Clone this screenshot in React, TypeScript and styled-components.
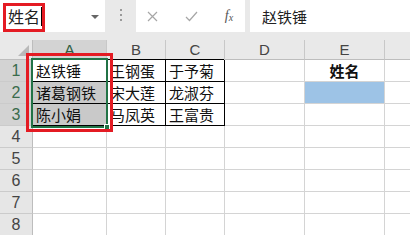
import React from 'react';
import styled, {createGlobalStyle} from 'styled-components';

const GlobalStyle = createGlobalStyle`
    html, body {
        margin: 0;
        padding: 0;
        width: 410px;
        height: 235px;
        overflow: hidden;
        background: #ffffff;
    }
    * {
        box-sizing: border-box;
    }
`;

const cjk = `"Noto Sans CJK SC", "Noto Sans", sans-serif`;

const Window = styled.div`
    width: 410px;
    height: 235px;
    overflow: hidden;
    background: #e9e9e9;
    font-family: ${cjk};
`;

const FormulaBar = styled.div`
    display: flex;
    align-items: stretch;
    height: 32px;
    margin-bottom: 8px;
`;

const NameBox = styled.div`
    position: relative;
    width: 105px;
    background: #ffffff;
    display: flex;
    align-items: center;
    padding-left: 8px;
    font-size: 16px;
    color: #222;
`;

const Caret = styled.span`
    display: inline-block;
    width: 1px;
    height: 19px;
    background: #000;
    margin-left: 1px;
`;

const DropArrow = styled.span`
    position: absolute;
    right: 6px;
    top: 15px;
    width: 0;
    height: 0;
    border-left: 4px solid transparent;
    border-right: 4px solid transparent;
    border-top: 4px solid #666;
`;

const Grip = styled.div`
    width: 31px;
    display: flex;
    flex-direction: column;
    align-items: center;
    justify-content: center;
    gap: 3px;
    padding-bottom: 2px;
    span {
        width: 2px;
        height: 2px;
        background: #9a9a9a;
    }
`;

const ButtonBox = styled.div`
    width: 109px;
    background: #ffffff;
    display: flex;
    align-items: center;
    margin-right: 5px;
`;

const ToolButton = styled.div<{ $w: number }>`
    width: ${p => p.$w}px;
    display: flex;
    justify-content: center;
    align-items: center;
`;

const Fx = styled.span`
    font-family: "Liberation Serif", serif;
    font-style: italic;
    font-size: 14px;
    color: #555;
    sub {
        font-size: 10px;
        vertical-align: baseline;
        position: relative;
        top: 1px;
    }
`;

const FormulaInput = styled.div`
    flex: 1;
    background: #ffffff;
    display: flex;
    align-items: center;
    padding-left: 12px;
    font-size: 15px;
    color: #222;
`;

const Highlight = styled.div<{ $l: number; $t: number; $w: number; $h: number }>`
    position: absolute;
    left: ${p => p.$l}px;
    top: ${p => p.$t}px;
    width: ${p => p.$w}px;
    height: ${p => p.$h}px;
    border: 3px solid #e41b23;
    pointer-events: none;
`;

const Sheet = styled.div`
    position: relative;
    display: grid;
    grid-template-columns: 33px 74px 59px 59px 80px 80px 80px;
    grid-template-rows: 20px;
    grid-auto-rows: 22px;
    background: #ffffff;
    width: 465px;
`;

const Corner = styled.div`
    background: #e9e9e9;
    border-right: 1px solid #bdbdbd;
    border-bottom: 1px solid #bdbdbd;
    display: flex;
    align-items: flex-end;
    justify-content: flex-end;
    padding: 0 3px 3px 0;
`;

const ColHead = styled.div<{ $selected?: boolean }>`
    background: ${p => p.$selected ? '#d3d3d3' : '#e9e9e9'};
    border-right: 1px solid #c8c8c8;
    border-bottom: 1px solid #bdbdbd;
    font-family: "Liberation Sans", Arial, sans-serif;
    font-size: 15px;
    color: ${p => p.$selected ? '#2f5d40' : '#444'};
    display: flex;
    align-items: center;
    justify-content: center;
    line-height: 1;
`;

const RowHead = styled.div<{ $selected?: boolean }>`
    background: ${p => p.$selected ? '#d3d3d3' : '#e6e6e6'};
    border-right: 1px solid #bdbdbd;
    border-bottom: 1px solid #cbcbcb;
    font-family: "Liberation Sans", Arial, sans-serif;
    font-size: 16px;
    color: ${p => p.$selected ? '#3a6b4c' : '#444'};
    display: flex;
    align-items: center;
    justify-content: center;
    line-height: 1;
`;

const Cell = styled.div<{ $ruled?: boolean; $fill?: string; $bold?: boolean; $center?: boolean }>`
    background: ${p => p.$fill || '#ffffff'};
    border-right: 1px solid ${p => p.$ruled ? '#000' : '#d4d4d4'};
    border-bottom: 1px solid ${p => p.$ruled ? '#000' : '#d4d4d4'};
    box-shadow: ${p => p.$ruled ? '-1px -1px 0 #000' : 'none'};
    font-size: 15px;
    font-weight: ${p => p.$bold ? 700 : 400};
    color: #111;
    display: flex;
    align-items: center;
    justify-content: ${p => p.$center ? 'center' : 'flex-start'};
    padding-left: ${p => p.$center ? 0 : 3}px;
    white-space: nowrap;
    overflow: hidden;
    line-height: 1;
`;

const Selection = styled.div`
    position: absolute;
    left: 31px;
    top: 18px;
    width: 77px;
    height: 70px;
    border: 2px solid #217346;
    pointer-events: none;
`;

const FillHandle = styled.span`
    position: absolute;
    right: -4px;
    bottom: -4px;
    width: 6px;
    height: 6px;
    background: #217346;
    border: 1px solid #ffffff;
`;

// the sixth column runs past the window edge, so its letter is not in view
const columns = ['A', 'B', 'C', 'D', 'E', ''];

const data: string[][] = [
    ['赵铁锤', '王钢蛋', '于予菊', '', '姓名', ''],
    ['诸葛钢铁', '宋大莲', '龙淑芬', '', '', ''],
    ['陈小娟', '马凤英', '王富贵', '', '', ''],
    ['', '', '', '', '', ''],
    ['', '', '', '', '', ''],
    ['', '', '', '', '', ''],
    ['', '', '', '', '', ''],
    ['', '', '', '', '', ''],
];

function App() {
    return (
        <Window>
            <GlobalStyle/>
            <FormulaBar>
                <NameBox>
                    姓名<Caret/>
                    <DropArrow/>
                    <Highlight $l={3} $t={3} $w={42} $h={29}/>
                </NameBox>
                <Grip><span/><span/><span/></Grip>
                <ButtonBox>
                    <ToolButton $w={33}>
                        <svg width="11" height="11" viewBox="0 0 11 11">
                            <path d="M1 1 L10 10 M10 1 L1 10" stroke="#a6a6a6" strokeWidth="1.2" fill="none"/>
                        </svg>
                    </ToolButton>
                    <ToolButton $w={44}>
                        <svg width="13" height="11" viewBox="0 0 13 11">
                            <path d="M1 6 L4.5 9.5 L12 1" stroke="#a6a6a6" strokeWidth="1.2" fill="none"/>
                        </svg>
                    </ToolButton>
                    <ToolButton $w={32}>
                        <Fx>f<sub>x</sub></Fx>
                    </ToolButton>
                </ButtonBox>
                <FormulaInput>赵铁锤</FormulaInput>
            </FormulaBar>
            <Sheet>
                <Corner>
                    <svg width="11" height="11" viewBox="0 0 11 11">
                        <path d="M11 0 L11 11 L0 11 Z" fill="#b9b9b9"/>
                    </svg>
                </Corner>
                {columns.map((c, i) => (
                    <ColHead key={i} $selected={c === 'A'}>{c}</ColHead>
                ))}
                {data.map((row, r) => (
                    <React.Fragment key={r}>
                        <RowHead $selected={r < 3}>{r + 1}</RowHead>
                        {row.map((text, c) => (
                            <Cell
                                key={c}
                                $ruled={r < 3 && c < 3}
                                $fill={c === 0 && (r === 1 || r === 2) ? '#c9c9c9' : c === 4 && r === 1 ? '#9dc3e6' : undefined}
                                $bold={c === 4 && r === 0}
                                $center={c === 4}
                            >
                                {text}
                            </Cell>
                        ))}
                    </React.Fragment>
                ))}
                <Selection><FillHandle/></Selection>
                <Highlight $l={26} $t={13} $w={87} $h={79}/>
            </Sheet>
        </Window>
    );
}

export default App;
